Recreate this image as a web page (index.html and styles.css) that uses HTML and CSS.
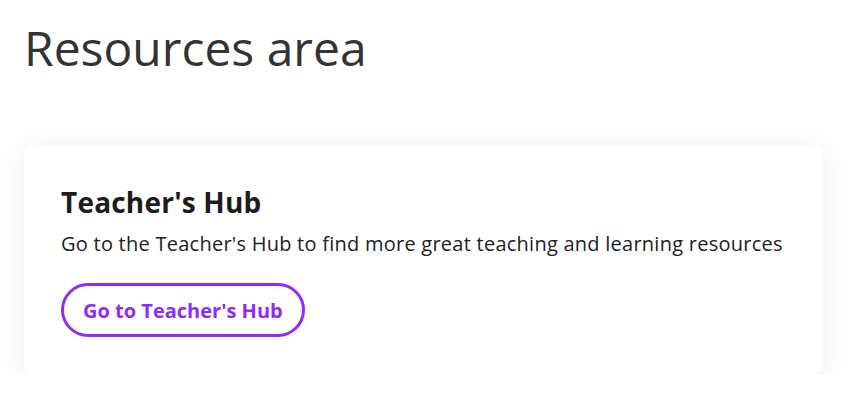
FILE: index.html
```html
<!DOCTYPE html>
<html lang="en">
<head>
<meta charset="utf-8">
<title>Resources area</title>
<link rel="stylesheet" href="styles.css">
</head>
<body>
<main class="page">
  <h1 class="page-title">Resources area</h1>
  <section class="card">
    <h2 class="card-title">Teacher's Hub</h2>
    <p class="card-text">Go to the Teacher's Hub to find more great teaching and learning resources</p>
    <a class="btn-outline" href="#">Go to Teacher's Hub</a>
  </section>
</main>
</body>
</html>
```

FILE: styles.css
```css
html, body {
  margin: 0;
  padding: 0;
  background: #ffffff;
}
body {
  font-family: "Open Sans", "Noto Sans", sans-serif;
  color: #222222;
}
.page {
  padding: 20px 29px 0 24px;
}
.page-title {
  margin: 0;
  font-size: 48px;
  font-weight: 400;
  line-height: 56px;
  color: #333333;
}
.card {
  margin-top: 69px;
  background: #ffffff;
  border-radius: 10px;
  box-shadow: 0 4px 30px rgba(0, 0, 0, 0.07);
  padding: 40px 37px 37px 37px;
  display: flex;
  flex-direction: column;
  align-items: flex-start;
}
.card-title {
  margin: 0;
  font-size: 28px;
  font-weight: 700;
  line-height: 34px;
  color: #1c1c1c;
  letter-spacing: 0.2px;
}
.card-text {
  margin: 12px 0 0 0;
  font-size: 20px;
  line-height: 26px;
  color: #222222;
  letter-spacing: 0.25px;
}
.btn-outline {
  box-sizing: border-box;
  margin-top: 26px;
  display: inline-flex;
  align-items: center;
  height: 54px;
  padding: 0 19px;
  border: 3px solid #8f2bf5;
  border-radius: 28px;
  color: #8f2bf5;
  font-size: 20px;
  font-weight: 700;
  text-decoration: none;
}
```
